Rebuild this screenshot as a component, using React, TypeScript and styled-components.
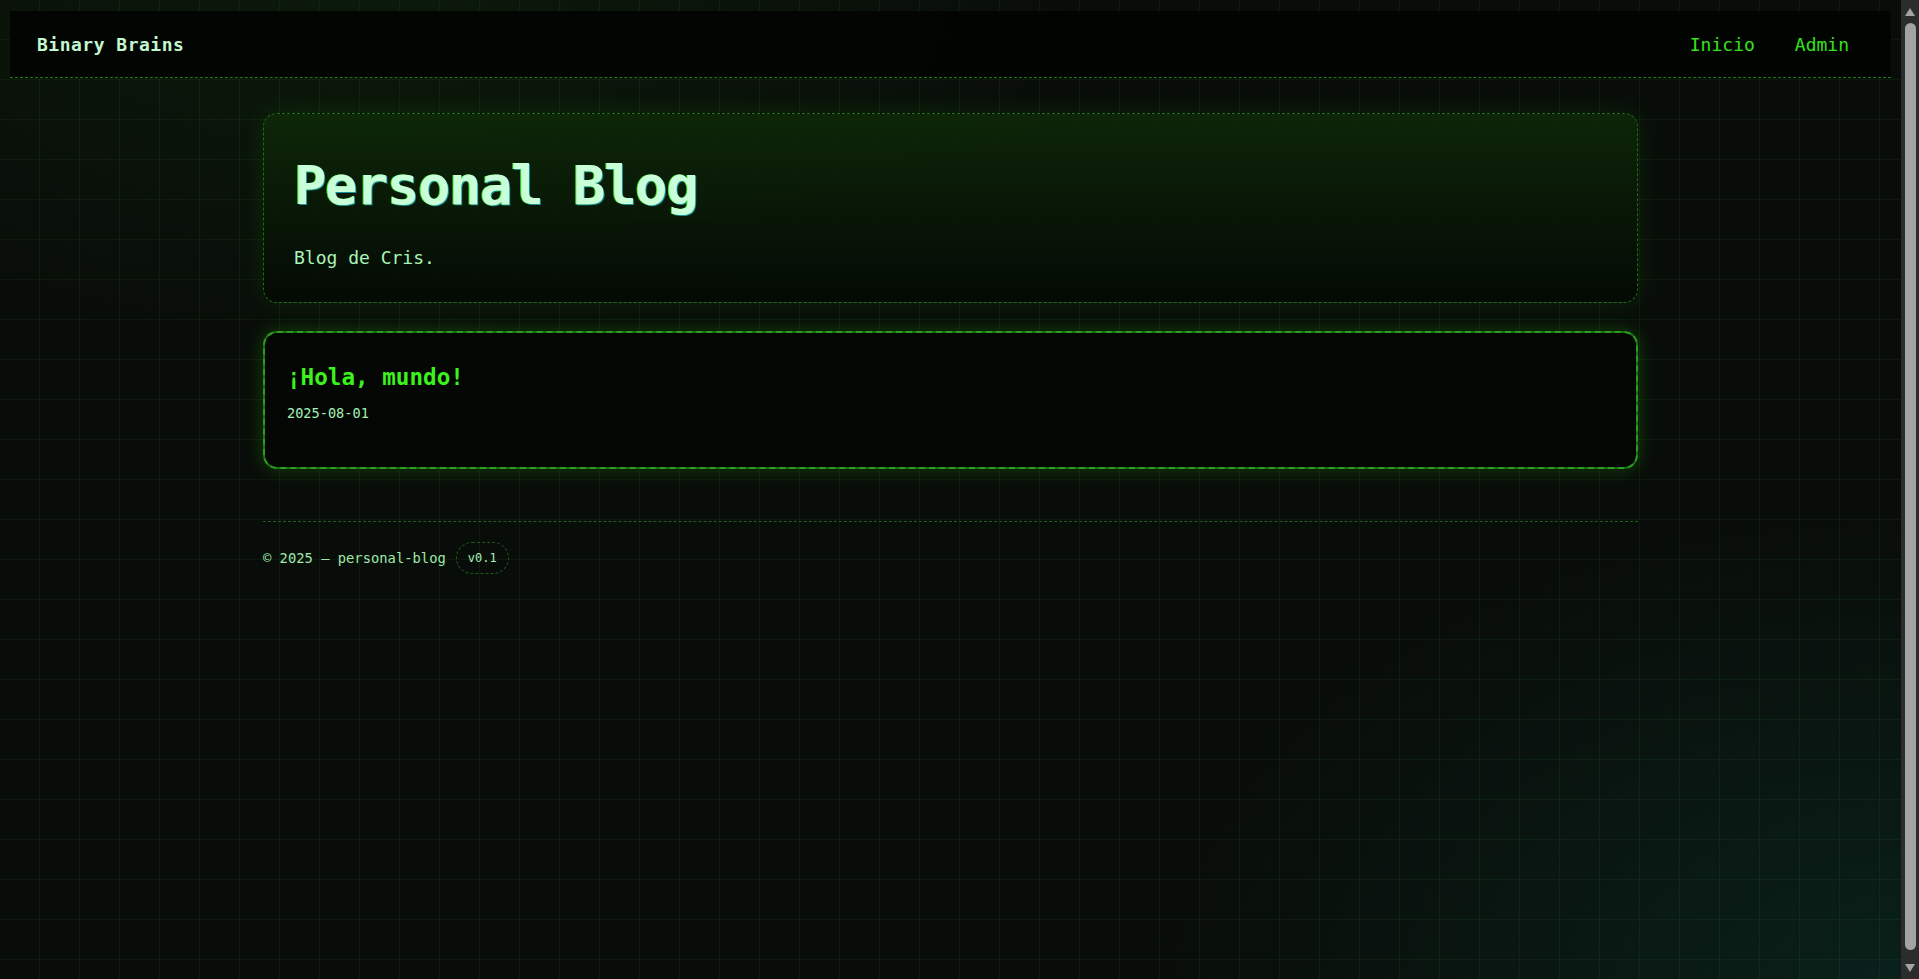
import React from "react";
import styled, { createGlobalStyle } from "styled-components";

const GlobalStyle = createGlobalStyle`
  html {
    color-scheme: dark;
    background-color: #090d09;
    background-image:
      linear-gradient(to right, transparent 39px, rgba(60, 200, 60, 0.07) 39px, rgba(60, 200, 60, 0.07) 40px),
      linear-gradient(to bottom, transparent 39px, rgba(60, 200, 60, 0.07) 39px, rgba(60, 200, 60, 0.07) 40px),
      radial-gradient(ellipse 1000px 500px at 20% 0%, rgba(20, 70, 15, 0.22), transparent 70%),
      radial-gradient(ellipse 1100px 700px at 100% 100%, rgba(12, 70, 60, 0.35), transparent 70%);
    background-size: 40px 40px, 40px 40px, 100% 100%, 100% 100%;
  }
  body {
    margin: 8px 26px 8px 8px;
    min-height: 100vh;
    font-family: "DejaVu Sans Mono", "Liberation Mono", monospace;
    color: #a8f0b8;
  }
`;

const Scrollbar = styled.div`
  position: fixed;
  top: 0;
  right: 0;
  bottom: 0;
  width: 18px;
  background: #2c2c2c;
  display: flex;
  flex-direction: column;
  align-items: center;
`;

const ScrollArrow = styled.div<{ $down?: boolean }>`
  width: 0;
  height: 0;
  margin: ${(p) => (p.$down ? "4px 0 7px" : "8px 0 7px")};
  border-left: 5px solid transparent;
  border-right: 5px solid transparent;
  ${(p) => (p.$down ? "border-top: 8px solid #a3a3a3;" : "border-bottom: 8px solid #a3a3a3;")}
`;

const ScrollThumb = styled.div`
  flex: 1;
  width: 11px;
  border-radius: 6px;
  background: #a3a3a3;
  margin-bottom: 10px;
`;

const Header = styled.header`
  margin: 3px 2px 0;
  height: 66px;
  padding: 0 42px 0 27px;
  display: flex;
  align-items: center;
  justify-content: space-between;
  background: rgba(2, 4, 2, 0.94);
  border-bottom: 1px dashed #23781c;
`;

const Brand = styled.a`
  font-size: 18px;
  font-weight: bold;
  letter-spacing: 0.5px;
  color: #c2f7cf;
  text-decoration: none;
`;

const Nav = styled.nav`
  display: flex;
  gap: 40px;
`;

const NavLink = styled.a`
  font-size: 18px;
  color: #35e31a;
  text-decoration: none;
`;

const Main = styled.main`
  width: 1375px;
  margin: 35px auto 0;
`;

const Hero = styled.section`
  padding: 42px 30px 31px;
  border: 1px dashed #1f6e17;
  border-radius: 14px;
  background: linear-gradient(180deg, rgba(14, 42, 8, 0.85) 0%, rgba(4, 10, 4, 0.9) 100%);
  box-shadow: 0 0 26px rgba(57, 255, 20, 0.1);
`;

const Title = styled.h1`
  margin: 0;
  font-size: 54px;
  line-height: 1.1;
  letter-spacing: -1.5px;
  font-weight: bold;
  color: #c8ffd9;
  text-shadow: -1px 0 #36e020, 1px 1px #1a8f9a;
`;

const Subtitle = styled.p`
  margin: 29px 0 0;
  font-size: 18px;
  line-height: 27px;
  color: #a9f5b9;
`;

const PostCard = styled.article`
  margin-top: 28px;
  padding: 30px 22px 43px;
  border: 2px dashed #2c9e1f;
  border-radius: 14px;
  background: linear-gradient(rgba(3, 3, 3, 0.97), rgba(3, 3, 3, 0.97)) padding-box,
    linear-gradient(#1d6e15, #1d6e15) border-box;
  box-shadow: 0 0 18px rgba(57, 255, 20, 0.22);
`;

const PostTitle = styled.h2`
  margin: 0;
  font-size: 22.6px;
  line-height: 28px;
  font-weight: bold;
  color: #3cf21c;
`;

const PostDate = styled.time`
  display: block;
  margin-top: 12px;
  font-size: 13.6px;
  line-height: 1.5;
  color: #a6f0b5;
`;

const Footer = styled.footer`
  margin-top: 52px;
  padding-top: 20px;
  border-top: 1px dashed #1f6217;
  display: flex;
  align-items: center;
  gap: 10px;
  font-size: 13.8px;
  color: #9fe8aa;
`;

const Badge = styled.span`
  padding: 8px 11px;
  font-size: 12px;
  border: 1px dashed #1d5a17;
  border-radius: 999px;
  color: #a8f0b8;
`;

export default function App() {
  return (
    <>
      <GlobalStyle />
      <Header>
        <Brand href="#">Binary Brains</Brand>
        <Nav>
          <NavLink href="#">Inicio</NavLink>
          <NavLink href="#">Admin</NavLink>
        </Nav>
      </Header>
      <Main>
        <Hero>
          <Title>Personal Blog</Title>
          <Subtitle>Blog de Cris.</Subtitle>
        </Hero>
        <PostCard>
          <PostTitle>¡Hola, mundo!</PostTitle>
          <PostDate>2025-08-01</PostDate>
        </PostCard>
        <Footer>
          <span>© 2025 — personal-blog</span>
          <Badge>v0.1</Badge>
        </Footer>
      </Main>
      <Scrollbar aria-hidden="true">
        <ScrollArrow />
        <ScrollThumb />
        <ScrollArrow $down />
      </Scrollbar>
    </>
  );
}
